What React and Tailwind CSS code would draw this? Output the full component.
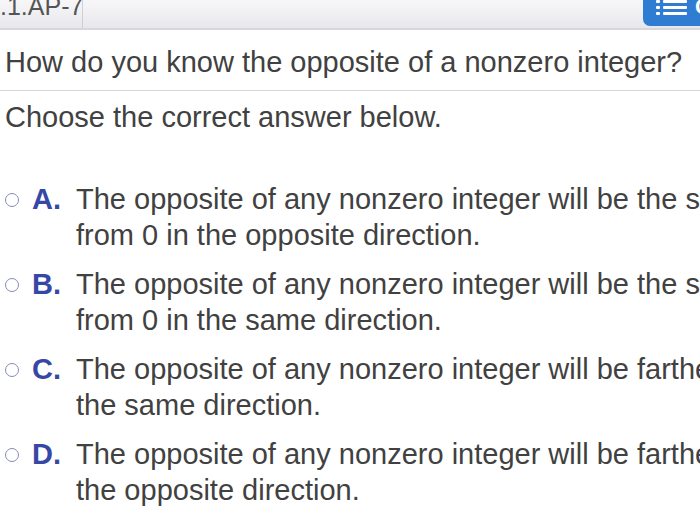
const OPTIONS = [
  { key: 'A', lines: ['The opposite of any nonzero integer will be the same distance', 'from 0 in the opposite direction.'] },
  { key: 'B', lines: ['The opposite of any nonzero integer will be the same distance', 'from 0 in the same direction.'] },
  { key: 'C', lines: ['The opposite of any nonzero integer will be farther from 0 in', 'the same direction.'] },
  { key: 'D', lines: ['The opposite of any nonzero integer will be farther from 0 in', 'the opposite direction.'] },
];

const ListIcon = () => (
  <svg width="31" height="16" viewBox="0 0 31 16" fill="#fff" className="shrink-0">
    <rect x="0" y="0" width="4" height="3" rx="1" />
    <rect x="7" y="0" width="24" height="3" rx="1" />
    <rect x="0" y="6" width="4" height="3" rx="1" />
    <rect x="7" y="6" width="24" height="3" rx="1" />
    <rect x="0" y="12" width="4" height="3" rx="1" />
    <rect x="7" y="12" width="24" height="3" rx="1" />
  </svg>
);

export default function App() {
  return (
    <div className="w-[700px] h-[506px] overflow-hidden bg-white font-['Liberation_Sans',Arial,sans-serif] text-[#414141]">
      <div className="h-[30px] flex items-stretch bg-gradient-to-b from-[#f7f7f9] to-[#e8e8ec] border-b-2 border-[#d8d8dc]">
        <div className="w-[83px] border-r border-[#cfcfd4] flex items-start overflow-hidden">
          <span className="text-[25px] leading-none -mt-[6px] whitespace-nowrap text-[#555]">.1.AP-7</span>
        </div>
        <div className="flex-1" />
        <div className="w-[57px] h-[26px] shrink-0 bg-[#2f7dd2] rounded-bl-[7px] flex items-start pl-[13px] gap-[8px] overflow-hidden">
          <ListIcon />
          <span className="shrink-0 text-white text-[22px] leading-none font-bold -mt-[4px]">C</span>
        </div>
      </div>

      <div className="pl-[5px] pt-[15px] pb-[11px] border-b border-[#d6d6d6]">
        <p className="text-[29px] leading-[34px] whitespace-nowrap">How do you know the opposite of a nonzero integer?</p>
      </div>

      <p className="pl-[5px] pt-[9px] text-[29px] leading-[34px] whitespace-nowrap">Choose the correct answer below.</p>

      <div className="mt-[47px] flex flex-col gap-[13px]">
        {OPTIONS.map((o) => (
          <div key={o.key} className="flex items-start whitespace-nowrap">
            <div className="w-[24px] pl-[5px] pt-[12px] shrink-0">
              <div className="w-[14px] h-[14px] rounded-full border-[1.5px] border-[#858cb8] bg-white" />
            </div>
            <span className="ml-[8px] w-[44px] shrink-0 text-[29px] leading-[36px] font-bold text-[#3747a6]">{o.key}.</span>
            <div className="text-[29px] leading-[36px]">
              {o.lines.map((l) => (
                <div key={l}>{l}</div>
              ))}
            </div>
          </div>
        ))}
      </div>
    </div>
  );
}
